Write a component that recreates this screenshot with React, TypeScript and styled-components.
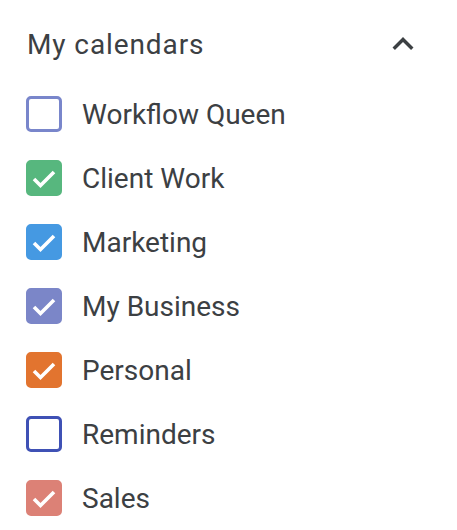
import React, { useState } from "react";
import styled, { createGlobalStyle } from "styled-components";

interface Calendar {
  name: string;
  color: string;
  checked: boolean;
}

interface CheckBoxProps {
  color: string;
  checked: boolean;
}

const calendars: Calendar[] = [
  { name: "Workflow Queen", color: "#7986cb", checked: false },
  { name: "Client Work", color: "#57b77e", checked: true },
  { name: "Marketing", color: "#4599e2", checked: true },
  { name: "My Business", color: "#7b86c8", checked: true },
  { name: "Personal", color: "#e2742f", checked: true },
  { name: "Reminders", color: "#3f51b5", checked: false },
  { name: "Sales", color: "#dc8176", checked: true },
];

const GlobalStyle = createGlobalStyle`
  body {
    margin: 0;
    background: #ffffff;
    font-family: Roboto, "Liberation Sans", Arial, sans-serif;
    color: #3c4043;
  }
`;

const Panel = styled.div`
  width: 457px;
  height: 530px;
  overflow: hidden;
  box-sizing: border-box;
  padding: 20px 33px 0 26px;
`;

const Header = styled.div`
  display: flex;
  align-items: center;
  justify-content: space-between;
  height: 48px;
`;

const Title = styled.div`
  font-size: 28px;
  font-weight: 400;
  padding-left: 1px;
  letter-spacing: 0.9px;
`;

const ToggleButton = styled.button`
  display: flex;
  align-items: center;
  justify-content: center;
  width: 42px;
  height: 42px;
  padding: 0;
  border: none;
  background: transparent;
  cursor: pointer;
  color: #3c4043;
`;

const List = styled.div`
  display: flex;
  flex-direction: column;
  margin-top: 14px;
`;

const Row = styled.label`
  display: flex;
  align-items: center;
  height: 64px;
  gap: 20px;
  cursor: pointer;
`;

const CheckBox = styled.span<CheckBoxProps>`
  display: flex;
  align-items: center;
  justify-content: center;
  width: 36px;
  height: 36px;
  box-sizing: border-box;
  border-radius: 5px;
  border: 3px solid ${props => props.color};
  background: ${props => (props.checked ? props.color : "transparent")};
  flex: 0 0 auto;
`;

const CheckMark = styled.svg`
  width: 36px;
  height: 36px;
  margin: -3px;
`;

const Label = styled.span`
  font-size: 28px;
  letter-spacing: 0;
`;

const App = () => {
  const [items, setItems] = useState<Calendar[]>(calendars);

  const toggle = (index: number) => {
    setItems(items.map((c, i) => (i === index ? { ...c, checked: !c.checked } : c)));
  };

  return (
    <>
      <GlobalStyle />
      <Panel>
        <Header>
          <Title>My calendars</Title>
          <ToggleButton aria-label="Collapse">
            <svg width="42" height="42" viewBox="0 0 24 24" fill="currentColor">
              <path d="M12 8l-6 6 1.41 1.41L12 10.83l4.59 4.58L18 14z" />
            </svg>
          </ToggleButton>
        </Header>
        <List>
          {items.map((cal, i) => (
            <Row key={cal.name} onClick={() => toggle(i)}>
              <CheckBox color={cal.color} checked={cal.checked}>
                {cal.checked && (
                  <CheckMark viewBox="0 0 36 36">
                    <polyline
                      points="8,19 14.5,25.5 28,12"
                      fill="none"
                      stroke="#ffffff"
                      strokeWidth="3.6"
                    />
                  </CheckMark>
                )}
              </CheckBox>
              <Label>{cal.name}</Label>
            </Row>
          ))}
        </List>
      </Panel>
    </>
  );
};

export default App;
